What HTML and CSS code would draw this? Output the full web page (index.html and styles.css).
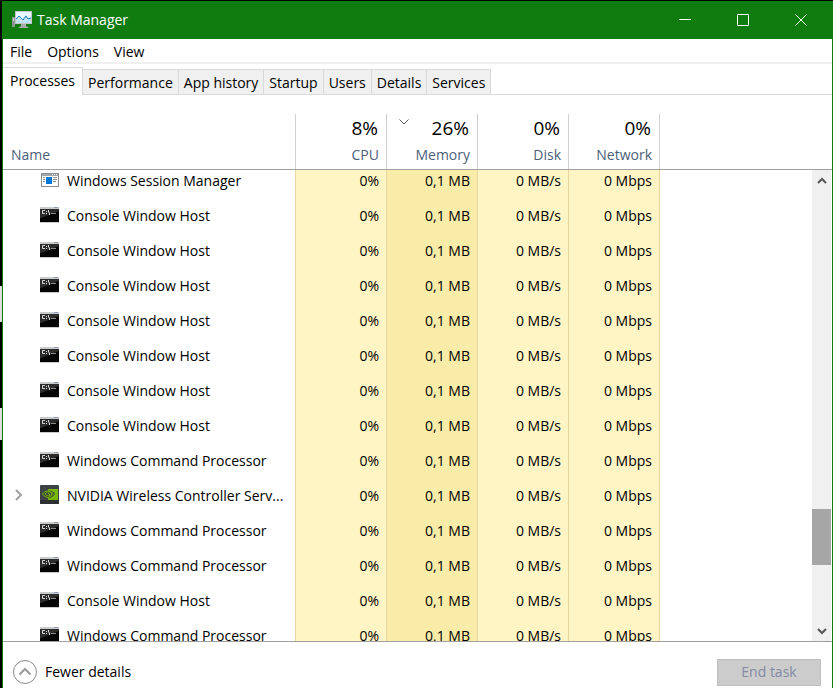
FILE: index.html
```html
<!DOCTYPE html>
<html lang="en">
<head>
    <meta charset="UTF-8">
    <meta name="viewport" content="width=device-width, initial-scale=1.0">
    <title>Task Manager</title>
    <link rel="stylesheet" href="styles.css">
</head>
<body>

<!-- icons shared by the process rows -->
<svg class="sprite" width="0" height="0" aria-hidden="true">
    <symbol id="icon-console" viewBox="0 0 19 16">
        <rect width="19" height="16" fill="#c9cbcd"/>
        <rect x="14" y="0" width="4" height="1" fill="#8d9bb0"/>
        <rect y="2" width="19" height="13" fill="#050505"/>
        <path d="M0 2h19v2L1 11H0z" fill="#2c2c2c"/>
        <path d="M5 3.500H2.500v3H5M6.500 4v1M6.500 6v1M8.500 3v2l1 1v2" fill="none" stroke="#d8d8d8"/>
        <rect x="11" y="6" width="5" height="1" fill="#8a8a8a"/>
    </symbol>
    <symbol id="icon-session" viewBox="0 0 18 14">
        <rect x="0.5" y="0.5" width="17" height="13" fill="#fff" stroke="#8a8d90"/>
        <rect x="1" y="1" width="16" height="2" fill="#a3a6a9"/>
        <path d="M11 1.5h1M13 1.5h1M15 1.5h1" stroke="#eee"/>
        <rect x="5" y="4" width="6" height="7" fill="#0078d7"/>
        <path d="M2 4.5h2M2 6.5h2M2 8.5h2M12 4.5h4M12 6.5h4M12 8.5h3" stroke="#8a8d90"/>
    </symbol>
    <symbol id="icon-nvidia" viewBox="0 0 19 19">
        <rect width="19" height="19" rx="1" fill="#3d4245"/>
        <path d="M0 15h19v3a1 1 0 0 1-1 1H1a1 1 0 0 1-1-1z" fill="#2c3033"/>
        <path d="M8 4h10v11H8z" fill="#76b900"/>
        <path d="M2 9c3-4 9-5 13 0-4 6-10 5-13 0z" fill="#3d4245"/>
        <path d="M2.500 9c3-4 7-4 11 0-4 5-8 4-11 0zM5 9c2-3 5-3 7 0-3 3-5 2-7 0zM8 8l2 2" fill="none" stroke="#76b900"/>
    </symbol>
</svg>

<div class="window">
    <header class="titlebar">
        <svg class="app-icon" width="20" height="18" viewBox="0 0 20 18" aria-hidden="true">
            <path d="M0 6h3v10H0z" fill="#8f9396"/>
            <path d="M1 7h1v3H1z" fill="#d9dcde"/>
            <path d="M9 13h5v2l3 2H6l3-2z" fill="#a9abad"/>
            <rect x="3.500" y="0.500" width="16" height="12" fill="#e8f6fd" stroke="#c3c6c8"/>
            <path d="M4 8l3-2 3 3 4-5 2 3 3-1v6H4z" fill="#bfe4f7"/>
            <path d="M4 8l3-3 4 4 3-4 2 3 3-1" fill="none" stroke="#1c7fb8"/>
        </svg>
        <h1>Task Manager</h1>
        <div class="window-buttons">
            <button type="button" aria-label="Minimize">
                <svg width="12" height="12"><path d="M0 5.500h12" fill="none" stroke="#fff"/></svg>
            </button>
            <button type="button" aria-label="Maximize">
                <svg width="12" height="12"><path d="M.5.5h11v11H.5z" fill="none" stroke="#fff"/></svg>
            </button>
            <button type="button" aria-label="Close">
                <svg width="12" height="12"><path d="M.5.5l11 11M11.500.5L.5 11.500" fill="none" stroke="#fff"/></svg>
            </button>
        </div>
    </header>

    <nav class="menu">
        <button type="button">File</button>
        <button type="button">Options</button>
        <button type="button">View</button>
    </nav>

    <div class="tabs" role="tablist">
        <button type="button" role="tab" class="active" aria-selected="true">Processes</button>
        <button type="button" role="tab">Performance</button>
        <button type="button" role="tab">App history</button>
        <button type="button" role="tab">Startup</button>
        <button type="button" role="tab">Users</button>
        <button type="button" role="tab">Details</button>
        <button type="button" role="tab">Services</button>
    </div>

    <table class="columns">
        <thead>
            <tr>
                <th class="name">Name</th>
                <th class="num"><strong>8%</strong>CPU</th>
                <th class="num sorted">
                    <svg class="sort-arrow" width="10" height="6" aria-hidden="true"><path d="M.5.5L5 5 9.500.5" fill="none" stroke="#555"/></svg>
                    <strong>26%</strong>Memory
                </th>
                <th class="num"><strong>0%</strong>Disk</th>
                <th class="num"><strong>0%</strong>Network</th>
                <td class="rest"></td>
            </tr>
        </thead>
    </table>

    <main class="list">
        <div class="rows">
            <table class="processes">
                <tbody id="processRows"></tbody>
            </table>
        </div>
        <div class="scrollbar">
            <button type="button" aria-label="Scroll up">
                <svg width="10" height="7"><path d="M1 6l4-4 4 4" fill="none" stroke="#555" stroke-width="2"/></svg>
            </button>
            <div class="thumb"></div>
            <button type="button" class="down" aria-label="Scroll down">
                <svg width="10" height="7"><path d="M1 1l4 4 4-4" fill="none" stroke="#555" stroke-width="2"/></svg>
            </button>
        </div>
    </main>

    <footer class="footer">
        <button type="button" class="fewer">
            <svg width="24" height="24" viewBox="0 0 24 24" aria-hidden="true">
                <circle cx="12" cy="12" r="11.500" fill="none" stroke="#888"/>
                <path d="M6.500 14.500L12 9l5.500 5.500" fill="none" stroke="#999" stroke-width="2"/>
            </svg>
            Fewer details
        </button>
        <button type="button" class="end-task" disabled>End task</button>
    </footer>
</div>

<script src="script.js"></script>
</body>
</html>
```
FILE: styles.css
```css
* {
    box-sizing: border-box;
}

body {
    margin: 0;
    height: 100vh;
    padding: 1px 0 0 2px;
    overflow: hidden;
    background: linear-gradient(#000 286px, #ddd 286px, #ddd 322px, #000 322px, #000 408px, #ddd 408px, #ddd 440px, #000 440px);
    color: #000;
    font-family: "Open Sans", "Noto Sans", sans-serif;
    font-size: 14px;
    line-height: 20px;
}

button {
    margin: 0;
    padding: 0;
    border: none;
    background: none;
    color: inherit;
    font: inherit;
}

svg {
    display: block;
}

.sprite {
    position: absolute;
}

.window {
    display: flex;
    flex-direction: column;
    height: 100%;
    border: 1px solid #107c10;
    border-width: 0 1px;
    background: #fff;
}

/* title bar */
.titlebar {
    display: flex;
    align-items: center;
    flex: none;
    height: 38px;
    padding: 0 2px 0 9px;
    background: #107c10;
    color: #fff;
}

.titlebar h1 {
    flex: 1;
    margin: 0 0 0 5px;
    font-size: 14px;
    font-weight: normal;
}

.window-buttons {
    display: flex;
}

.window-buttons button {
    display: flex;
    align-items: center;
    justify-content: center;
    width: 58px;
    height: 38px;
}

/* menu and tabs */
.menu {
    display: flex;
    flex: none;
    gap: 15px;
    height: 25px;
    padding: 2px 7px 0;
    border-bottom: 2px solid #f0f0f0;
}

.tabs {
    display: flex;
    flex: none;
    align-items: flex-end;
    height: 31px;
    box-shadow: inset 0 -1px #d9d9d9;
}

.tabs button {
    height: 26px;
    padding: 2px 5px 0;
    border: 1px solid #d9d9d9;
    border-left: none;
    background: #f0f0f0;
}

.tabs .active {
    height: 28px;
    padding: 0 7px 2px;
    border-bottom: none;
    background: #fff;
}

/* process table */
table {
    width: 100%;
    border-collapse: collapse;
    table-layout: fixed;
}

th,
td {
    padding: 0;
    font-weight: normal;
    text-align: left;
}

.name {
    width: 292px;
}

.num {
    width: 91px;
    padding-right: 7px;
    text-align: right;
}

.columns {
    flex: none;
    margin-top: 19px;
    border-bottom: 1px solid #a0a0a0;
    border-collapse: separate;
    border-spacing: 0;
}

.columns th {
    position: relative;
    height: 55px;
    padding-bottom: 4px;
    color: #4c607a;
    vertical-align: bottom;
}

.columns .name {
    padding-left: 8px;
}

.columns .num,
.columns .rest {
    border-left: 1px solid #d0d0d0;
}

.columns strong {
    display: block;
    margin: 0 1px 5px 0;
    color: #000;
    font-size: 19px;
    font-weight: normal;
    line-height: 24px;
}

.sort-arrow {
    position: absolute;
    top: 5px;
    left: 12px;
}

.list {
    display: flex;
    flex: 1;
    min-height: 0;
    border-bottom: 1px solid #a0a0a0;
}

.rows {
    flex: 1;
    overflow: hidden;
}

/* list is scrolled part of the way into the first row */
.processes {
    margin-top: -7px;
    border-collapse: separate;
    border-spacing: 0;
}

.processes td {
    height: 35px;
}

.processes .num {
    border-left: 1px solid #e8d5a0;
    background: #fff4c4;
}

.processes .sorted {
    background: #f9eca8;
}

.processes .rest {
    border-left: 1px solid #e8d5a0;
}

.process {
    display: grid;
    grid-template-columns: 17px 19px 1fr;
    column-gap: 8px;
    align-items: center;
    padding: 0 8px 0 12px;
}

.process span {
    overflow: hidden;
    text-overflow: ellipsis;
    white-space: nowrap;
}

.process svg {
    justify-self: center;
    margin-bottom: 2px;
}

.process .expand {
    justify-self: start;
}

/* scroll bar */
.scrollbar {
    display: grid;
    grid-template-rows: 20px 319fr 56fr 56fr 20px;
    flex: none;
    width: 19px;
    margin-right: 1px;
    background: #f0f0f0;
}

.scrollbar button {
    display: flex;
    align-items: center;
    justify-content: center;
}

.thumb {
    grid-row: 3;
    background: #a6a6a6;
}

.down {
    grid-row: 5;
}

/* footer */
.footer {
    display: flex;
    flex: none;
    align-items: center;
    justify-content: space-between;
    height: 46px;
    padding: 14px 11px 0 10px;
}

.fewer {
    display: flex;
    align-items: center;
    gap: 8px;
}

.end-task {
    width: 104px;
    height: 27px;
    border: 1px solid #bfbfbf;
    background: #ccc;
    color: #838aa5;
}
```
FILE: script.js
```javascript
var processes = [
    { name: 'Windows Session Manager', icon: 'session', width: 18, height: 14 },
    { name: 'Console Window Host' },
    { name: 'Console Window Host' },
    { name: 'Console Window Host' },
    { name: 'Console Window Host' },
    { name: 'Console Window Host' },
    { name: 'Console Window Host' },
    { name: 'Console Window Host' },
    { name: 'Windows Command Processor' },
    { name: 'NVIDIA Wireless Controller Serv...', icon: 'nvidia', width: 19, height: 19, expandable: true },
    { name: 'Windows Command Processor' },
    { name: 'Windows Command Processor' },
    { name: 'Console Window Host' },
    { name: 'Windows Command Processor' }
];

var arrow = '<svg class="expand" width="8" height="12"><path d="M1 1l5 5-5 5" fill="none" stroke="#a0a0a0" stroke-width="2"/></svg>';

document.getElementById('processRows').innerHTML = processes.map(function (p) {
    return '<tr>' +
        '<td class="name"><div class="process">' +
        (p.expandable ? arrow : '<i></i>') +
        '<svg width="' + (p.width || 19) + '" height="' + (p.height || 16) + '"><use href="#icon-' + (p.icon || 'console') + '"/></svg>' +
        '<span>' + p.name + '</span></div></td>' +
        '<td class="num">0%</td>' +
        '<td class="num sorted">0,1 MB</td>' +
        '<td class="num">0 MB/s</td>' +
        '<td class="num">0 Mbps</td>' +
        '<td class="rest"></td>' +
        '</tr>';
}).join('');
```
